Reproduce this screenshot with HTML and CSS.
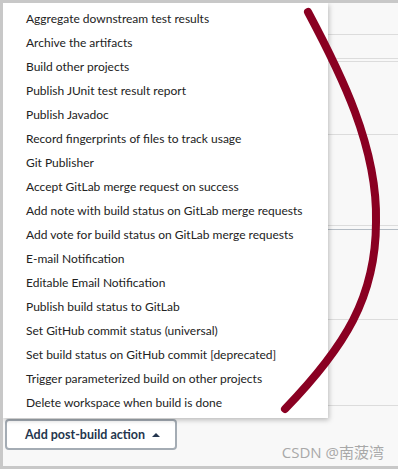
FILE: index.html
```html
<!DOCTYPE html>
<html lang="en">
<head>
    <meta charset="UTF-8">
    <title>Post-build actions</title>
    <link rel="stylesheet" href="styles.css">
</head>
<body>
    <div class="frame">
        <div class="page">
            <!-- form rows behind the open dropdown -->
            <div class="rows">
                <div class="row r1"></div>
                <div class="row r2"></div>
                <div class="row r3"></div>
                <div class="row r4"></div>
                <div class="row r5"></div>
                <div class="row r6 dark"></div>
                <div class="row r7"></div>
                <div class="row r8"></div>
            </div>

            <ul class="menu">
                <li>Aggregate downstream test results</li>
                <li>Archive the artifacts</li>
                <li>Build other projects</li>
                <li>Publish JUnit test result report</li>
                <li>Publish Javadoc</li>
                <li>Record fingerprints of files to track usage</li>
                <li>Git Publisher</li>
                <li>Accept GitLab merge request on success</li>
                <li>Add note with build status on GitLab merge requests</li>
                <li>Add vote for build status on GitLab merge requests</li>
                <li>E-mail Notification</li>
                <li>Editable Email Notification</li>
                <li>Publish build status to GitLab</li>
                <li>Set GitHub commit status (universal)</li>
                <li>Set build status on GitHub commit [deprecated]</li>
                <li>Trigger parameterized build on other projects</li>
                <li>Delete workspace when build is done</li>
            </ul>

            <div class="actions">
                <button class="add-btn">Add post-build action <span class="caret"></span></button>
                <span class="watermark">CSDN @南菠湾</span>
            </div>

            <svg class="scribble" width="398" height="469" viewBox="0 0 398 469">
                <path d="M308,12 C340,72 378,147 376,222 C376,297 345,347 285,409" />
            </svg>
        </div>
    </div>
</body>
</html>
```

FILE: styles.css
```css
body {
    margin: 0;
    font-family: "Lato", "Open Sans", sans-serif;
    color: #222;
}

.frame {
    width: 398px;
    height: 469px;
    box-sizing: border-box;
    border: 3px solid #c8c8c8;
    border-right: none;
    background: #f8f8f8;
    overflow: hidden;
}

.page {
    position: relative;
    height: 100%;
}

.rows .row {
    border-bottom: 1px solid #dcdcdc;
}

.rows .row.dark {
    border-bottom: 1px solid #b4bcc4;
}

.r1 { height: 31px; }
.r2 { height: 23px; }
.r3 { height: 2px; }
.r4 { height: 72px; }
.r5 { height: 90px; }
.r6 { height: 3px; }
.r7 { height: 89px; }
.r8 { height: 85px; }

.menu {
    position: absolute;
    top: 0;
    left: 0;
    width: 325px;
    margin: 0;
    padding: 4px 0 3px;
    list-style: none;
    background: #fff;
    box-shadow: 1px 2px 5px rgba(0, 0, 0, 0.25);
    z-index: 2;
}

.menu li {
    height: 24px;
    line-height: 24px;
    padding-left: 23px;
    font-size: 12px;
    white-space: nowrap;
}

.actions {
    position: absolute;
    left: 0;
    right: 0;
    bottom: 0;
    height: 50px;
}

.add-btn {
    position: absolute;
    left: 2px;
    top: 3px;
    height: 31px;
    padding: 0 15px 0 18px;
    border: 2px solid #a4acb4;
    border-radius: 4px;
    background: #fff;
    color: #24364e;
    font-family: "Lato", sans-serif;
    font-size: 12.5px;
    font-weight: 700;
}

.caret {
    display: inline-block;
    margin-left: 4px;
    border-left: 4px solid transparent;
    border-right: 4px solid transparent;
    border-bottom: 4px solid #24364e;
    vertical-align: 2px;
}

.watermark {
    position: absolute;
    right: 14px;
    top: 25px;
    font-size: 15px;
    color: #a8a8a8;
    font-family: "Open Sans", "Noto Sans CJK SC", sans-serif;
}

.scribble {
    position: absolute;
    top: -3px;
    left: -3px;
    z-index: 3;
    fill: none;
    stroke: #8a0022;
    stroke-width: 8;
    stroke-linecap: round;
}
```
